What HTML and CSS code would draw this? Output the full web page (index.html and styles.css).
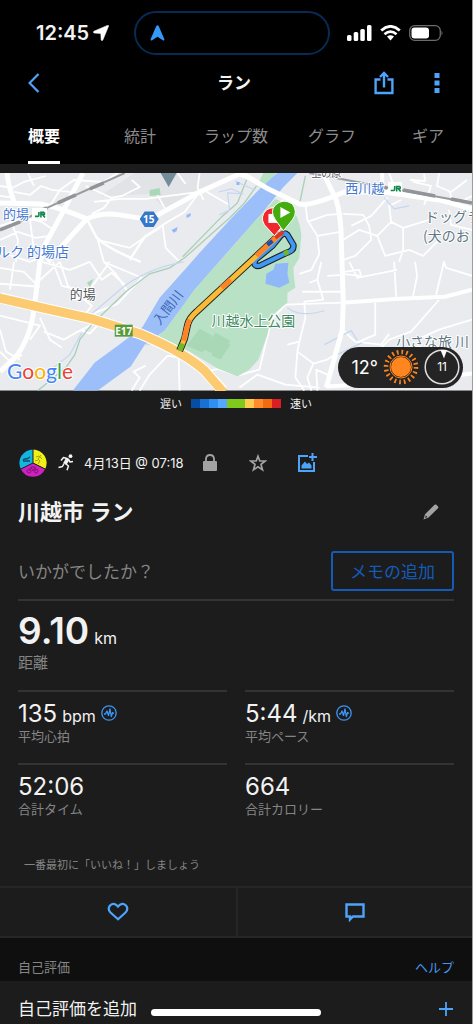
FILE: index.html
```html
<!DOCTYPE html>
<html lang="ja">
<head>
<meta charset="utf-8">
<meta name="viewport" content="width=device-width, initial-scale=1">
<title>ラン</title>
<link rel="stylesheet" href="styles.css">
</head>
<body>
<div class="app">
  <header class="top">
    <div class="status">
      <div class="clock"><span>12:45</span>
        <svg width="16" height="16" viewBox="0 0 16 16"><path d="M15.500 1.200 9.800 15Q9 16.500 8.200 15L7.800 8.400 1.200 8Q-.4 7.300 1 6.200L14.500 .4Q15.800 .2 15.500 1.200Z" fill="#fff" stroke="#fff" stroke-width=".6"/></svg>
      </div>
      <div class="island">
        <svg width="15" height="16" viewBox="0 0 15 16"><path d="M6.200 1.200Q7.500-.8 8.800 1.200L14.400 14.200Q14.600 16 12.800 15.200L7.500 11.800 2.200 15.200Q.4 16 .6 14.200Z" fill="#3598fb"/></svg>
      </div>
      <div class="signals">
        <svg width="25" height="16" viewBox="0 0 25 16" fill="#fff"><rect x="0" y="10" width="4.500" height="6" rx="1.500"/><rect x="6.700" y="7" width="4.500" height="9" rx="1.500"/><rect x="13.300" y="4" width="4.500" height="12" rx="1.500"/><rect x="20" y="0" width="4.500" height="16" rx="1.500"/></svg>
        <svg width="21" height="16" viewBox="0 0 21 16" fill="none" stroke="#fff" stroke-width="2.800"><path d="M1.200 5.500Q10.500-2.700 19.800 5.500M4.500 9.200Q10.500 4 16.500 9.200"/><path d="M7 11.600Q10.500 8.800 14 11.600L10.500 15.500Z" fill="#fff" stroke="none"/></svg>
        <svg width="35" height="16" viewBox="0 0 35 16"><rect x=".7" y=".7" width="30.600" height="14.600" rx="5" fill="none" stroke="#6b6b6b" stroke-width="1.300"/><rect x="2.500" y="2.500" width="17.500" height="11" rx="3" fill="#fff"/><path d="M32.500 5.500Q34.500 8 32.500 10.500Z" fill="#6b6b6b"/></svg>
      </div>
    </div>
    <div class="nav">
      <button class="icon" type="button" aria-label="戻る"><svg width="12" height="20" viewBox="0 0 12 20" fill="none" stroke="#4ea4fb" stroke-width="2.200"><path d="M10.500 1 1.600 10 10.500 19"/></svg></button>
      <h1>ラン</h1>
      <div class="nav-right">
        <button class="icon" type="button" aria-label="共有"><svg width="20" height="24" viewBox="0 0 20 24" fill="none" stroke="#4ea4fb" stroke-width="2.400"><path d="M6.500 8.500H1.600V22H18.400V8.500H13.500M10 16.500V2.500M6 6 10 2 14 6"/></svg></button>
        <button class="icon" type="button" aria-label="メニュー"><svg width="6" height="22" viewBox="0 0 6 22" fill="#4ea4fb"><path d="M.5 1h5v5h-5zM.5 8.500h5v5h-5zM.5 16h5v5h-5z"/></svg></button>
      </div>
    </div>
    <nav class="tabs">
      <a class="on" href="#overview">概要</a><a href="#stats">統計</a><a href="#laps">ラップ数</a><a href="#graph">グラフ</a><a href="#gear">ギア</a>
    </nav>
  </header>

  <section class="map">
    <svg class="map-art" viewBox="0 173 473 218">
      <rect y="173" width="473" height="218" fill="#e9ebee"/>
      <path d="M135 173H240L165 208 150 194 100 196Z" fill="#e1e3e7"/>
      <g fill="none" stroke="#fff" stroke-width="1.800" stroke-linejoin="round">
        <path d="M0 186 12 188 24 182 46 176M14 192 30 195 41 186 52 190 70 192M28 173 34 186M0 196 15 198M50 206 60 190 74 180 104 182 118 173M86 186 112 198 122 196 140 187 132 180M94 202 120 199 146 199 200 192M112 198 104 208 92 214M0 226 25 218 42 222 55 231M0 240 18 232 36 238 50 236M10 218 18 240 16 262M30 220 34 250M0 252 30 262 44 256M0 268 24 272 36 284 60 262M14 262 10 290M0 284 40 287M53 262 62 286 78 290M42 262 70 270 90 262 102 280 112 273 125 285M60 262 68 286 92 306 84 316M75 300 90 290 110 262M104 262 142 278 118 304 88 316M98 240 104 262 116 274 128 292M98 240 130 248 163 225M0 316 40 326 30 340M0 330 6 352 20 360M40 318 50 340 62 348M44 332 64 340 76 333 98 322M80 330 90 334 105 318 122 326M0 352 10 362 22 355M165 208 155 190M200 173 198 188 204 200M204 190 230 205M178 173 186 184M163 225 166 248 180 262M163 225 185 212 200 192"/>
        <path d="M306 204 308 220 318 236 320 254 312 270 300 274M256 204 272 206 284 200M308 222 328 215 343 214M318 236 341 232M344 240 360 230 378 236 392 222 404 228 430 220M352 226 372 216 388 198M344 214 364 215 370 226 372 240 356 256 344 260M378 236 386 256 410 250 424 256 440 240M392 222 390 206 402 200M404 228 404 250 400 262M395 262 397 297M414 296 418 276 416 262M437 295 445 262 447 268 473 276M350 262 358 278 398 270M344 262 342 274 362 276 360 270 344 272M322 262 318 280 324 300 305 302 306 318 300 342 288 345 M318 280 310 283M328 276 344 275M343 292 316 292 303 292M376 303 376 335 360 342M343 330 356 342 382 345 390 334M300 342 298 352 314 364 308 378 312 391M314 364 328 360 336 355M298 352 296 378 305 391M318 391 317 370 330 376M440 173 438 186 452 192 468 180M425 205 432 186 414 182M390 173 394 184M411 180 426 181 425 174M450 190 455 205 473 196M473 230 452 225 450 210"/>
        <path d="M180 391 179 358 168 356 150 375 140 391M132 391 140 378 134 372 146 366M196 365 210 371 224 368M218 369 238 376 260 370 266 345 272 320 286 305 343 303M240 388 258 375 286 385 320 388M418 340 440 330 473 320M375 355 390 340 412 332 440 300"/>
      </g>
      <g fill="none" stroke="#a9cfb5" stroke-width="1.300"><path d="M257 186 245 203 230 218 185 258 170 268 150 274 126 292 98 319M247 180 238 203 222 217 183 257M98 317 80 340 75 355 66 368 38 391M306 176 300 205"/></g>
      <path d="M184 262Q150 268 125 286L92 314M82 333 70 355 45 375M219 192 232 189 244 194 228 193 230 210 220 215M236 181 246 186 256 190M385 198 395 209 410 206M325 345 352 331 358 341M338 355 363 343M288 308Q300 318 325 311" fill="none" stroke="#c6d7f2" stroke-width="1.200"/>
      <path d="M278 173 267 182 233 217 200 253 186 269 160 298 150 315 143 327 118 346 95 363 73 391H98L131 367 145 345 165 331 182 308 195 290 225 256 262 214 284 187 298 173Z" fill="#9cbffa"/>
      <path d="M145 346 165 331 182 308 195 290 225 256 262 214 276 199 290 205Q300 216 302 235L300 258 294 268 295 281 296 288 288 293 288 303 272 316 268 335 259 360 250 370 238 377 218 369 190 352 165 341ZM264 173H277L262 188 257 186Z" fill="#b9e1c5"/>
      <path d="M200 329 213 336 203 353 187 346ZM216 333 231 341 219 356 204 350ZM220 340 231 345 221 360 212 356Z" fill="#a9d8b6"/>
      <path d="M150 190 160 188 161 195 150 196ZM87 283 94 279 90 287Z" fill="#a9d8b6"/>
      <path d="M267 274 274 270 276 264 289 263 288 274 290 283 280 288 266 284ZM172 230 178 227 177 231 174 233ZM187 215 191 213 191 216 187 218ZM237 182 240 182 240 185 237 185Z" fill="#90b7f8"/>
      <g fill="none" stroke="#fff" stroke-linejoin="round">
        <path d="M7 173Q8 184 14 202M0 203 40 204Q56 206 87 219L65 243 48 262M87 219Q102 212 120 215L145 219" stroke-width="5"/>
        <path d="M83 173 62 214 46 243 40 262 34 310Q30 340 15 358L0 372" stroke-width="5"/>
        <path d="M150 219 160 214 200 192 240 174 247 176 267 188 300 204Q310 207 345 192H385L440 200 473 209" stroke-width="5"/>
        <path d="M324 173 337 200Q342 218 342 240L344 303 343 330 327 388" stroke-width="5"/>
        <path d="M343 303 400 299 446 297 473 290M327 387 400 383 473 374M383 173V190" stroke-width="4"/>
        <path d="M87 219 97 238Q110 250 141 262M161 227 145 237 130 260" stroke-width="2.500"/>
      </g>
      <path d="M0 230 20 222 47 208 125 173M310 173 390 188 473 203" fill="none" stroke="#999b9e" stroke-width="2"/>
      <path d="M0 230 20 222M40 211 47 208M58 203 76 195M90 189 104 183M372 185 388 188M404 190 436 196M452 199 473 203" fill="none" stroke="#929497" stroke-width="3.500"/>
      <path d="M161 173H177L169 187Z" fill="#738c9a"/>
      <path d="M0 298Q45 309 91 319L140 334Q185 353 205 371L223 391" fill="none" stroke="#fff" stroke-width="11"/>
      <path d="M-2 298Q45 309 91 319L140 334Q185 353 205 371L224 393" fill="none" stroke="#fbca71" stroke-width="9"/>
      <g fill="none" stroke-linejoin="round">
        <path d="M180 351 185 339 188 325Q190 318 197 312L281 234" stroke="#222" stroke-width="7"/>
        <path d="M281 236 273 246 256 260Q253 267 260 266L287 253Q295 251 294 245L288 235Q285 232 281 236Z" stroke="#222" stroke-width="6.500"/>
        <path d="M281 236 273 246 256 260Q253 267 260 266L287 253Q295 251 294 245L288 235Q285 232 281 236Z" stroke="#3e98f4" stroke-width="4.200"/>
        <path d="M180 351 185 339 188 325Q190 318 197 312L281 234" stroke="#fbba35" stroke-width="5"/>
        <path d="M184 341 188 325 190 320M222 288 231 280M257 256 277 237" stroke="#fb8328" stroke-width="5"/>
        <path d="M180 351 183 344M285 254 289 252" stroke="#6fba24" stroke-width="5"/>
        <path d="M276 238 284 232" stroke="#df3526" stroke-width="4"/>
        <path d="M268 245 273 241" stroke="#1c50a8" stroke-width="4"/>
      </g>
      <path d="M275 236 265 225Q260 217 267 210 273 206 281 209L288 220Z" fill="#f0272d" stroke="#fff"/>
      <rect x="269" y="214" width="10" height="9" fill="#fff"/>
      <path d="M284 231 276 220Q270 211 276 205 284 198 293 204 299 212 293 220Z" fill="#43ad10" stroke="#fff"/>
      <path d="M281 207V218L291 212.500Z" fill="#fff"/>
      <rect x="32" y="208" width="15" height="13" fill="#fff"/><rect x="389" y="182" width="14" height="13" fill="#fff"/>
      <g fill="none" stroke="#11884c" stroke-width="1.600"><path d="M35 216.500H38Q39 216.500 39 215V212M41 217.500V212.500H44Q45 213 44.500 214.500H42.500L45 217.500"/><path d="M391.500 190.500H394.500Q395.500 190.500 395.500 189V186M397.500 191.500V186.500H400.500Q401.500 187 401 188.500H399L401.500 191.500"/></g>
      <path d="M145 211.500H154L159 219 154 227H145L140 219Z" fill="#3478c7"/>
      <rect x="115" y="325" width="18" height="12" fill="#569a3c"/>
      <g class="map-text">
        <text class="badge" x="149" y="223" text-anchor="middle">15</text>
        <text class="badge" x="124" y="335" text-anchor="middle">E17</text>
        <text class="blue" x="3" y="219">的場</text>
        <text class="blue big" x="-4" y="257">ルク 的場店</text>
        <text class="blue" x="346" y="193">西川越</text>
        <text class="dark" x="70" y="299">的場</text>
        <text class="green" x="212" y="326">川越水上公園</text>
        <text class="slate" x="426" y="222">ドッグラ</text>
        <text class="slate" x="424" y="241">(犬のお</text>
        <text class="slate" x="397" y="347">小さな旅 川</text>
        <text class="water" transform="translate(160 326) rotate(-52)">入間川</text>
        <text class="dark small" x="312" y="177">上の原</text>
        <text class="google" x="7" y="379"><tspan fill="#4285f4">G</tspan><tspan fill="#ea4335">o</tspan><tspan fill="#f5b400">o</tspan><tspan fill="#4285f4">g</tspan><tspan fill="#34a853">l</tspan><tspan fill="#ea4335">e</tspan></text>
      </g>
    </svg>
    <div class="weather">
      <span>12°</span>
      <svg width="36" height="36" viewBox="-18 -18 36 36"><circle r="10" fill="#ff861f"/><circle r="11" fill="none" stroke="#ff861f" stroke-width="1"/><circle r="15" fill="none" stroke="#ff861f" stroke-width="4.500" stroke-dasharray="1.700 3.012"/></svg>
      <svg width="36" height="36" viewBox="-18 -18 36 36"><circle r="16.800" fill="none" stroke="#ddd" stroke-width="1.500"/><path d="M-1.500-17H5L2-8.500Z" fill="#fff"/><text y="4" text-anchor="middle" class="wind">11</text></svg>
    </div>
  </section>

  <div class="legend"><span>遅い</span><div class="scale"><i class="c1"></i><i class="c2"></i><i class="c3"></i><i class="c4"></i><i class="c5"></i><i class="c5"></i><i class="c6"></i><i class="c7"></i><i class="c8"></i><i class="c9"></i></div><span>速い</span></div>

  <main class="main">
    <div class="meta">
      <svg width="28" height="28" viewBox="-14 -14 28 28"><path d="M0 0V-13.500A13.500 13.500 0 0 0-12.200 6Z" fill="#12b4e0"/><path d="M0 0V-13.500A13.500 13.500 0 0 1 12.200 6Z" fill="#f1f016"/><path d="M0 0-12.200 6A13.500 13.500 0 0 0 12.200 6Z" fill="#cf21c1"/><path d="M0-14V0L-12.500 6.200M0 0 12.500 6.200" stroke="#1c1c1c" fill="none"/><path d="M-10-3Q-8-5-6-4L-3-6M-10-2H-3" stroke="#134a66" stroke-width="1.500" fill="none"/><path d="M8-8 5-4 7-2 5 1M3-6 6-7 9-4M5-3 2-2" stroke="#a3a20b" fill="none"/><circle cx="-4" cy="8" r="2" fill="none" stroke="#81157a"/><circle cx="3" cy="8" r="2" fill="none" stroke="#81157a"/><path d="M-4 8-2 4 2 4 3 8M-2 4 0 8 2 4" stroke="#81157a" fill="none"/></svg>
      <svg class="runner" width="16" height="17" viewBox="0 0 16 17" fill="none" stroke="#f2f2f2" stroke-width="1.500" stroke-linejoin="round"><circle cx="12.500" cy="2.200" r="1.900" fill="#f2f2f2" stroke="none"/><path d="M9.800 4.800 6.800 10" stroke-width="3.800"/><path d="M10.500 5 5.500 3.500 3 6.500M10.500 5.500 12 8 15 7.500M7.500 9.500 10.500 12 9 16.200M6 9.500 4.500 12.500 .5 13.500"/></svg>
      <span class="date">4月13日 @ 07:18</span>
      <svg class="lock" width="14" height="17" viewBox="0 0 14 17"><rect y="7" width="14" height="10" rx="1" fill="#a3a3a3"/><path d="M3 8V4.500Q3.500 1 7 1T11 4.500V8" fill="none" stroke="#a3a3a3" stroke-width="1.800"/></svg>
      <button class="icon" type="button" aria-label="お気に入り"><svg width="18" height="18" viewBox="0 0 18 18" fill="none" stroke="#a3a3a3" stroke-width="1.700"><path d="M9 2.200 10.800 7H16.200L12 10.400 13.500 15.800 9 12.700 4.500 15.800 6 10.400 1.800 7H7.200Z"/></svg></button>
      <button class="icon photo" type="button" aria-label="写真を追加"><svg width="20" height="20" viewBox="0 0 20 20" fill="none" stroke="#4ea4fb" stroke-width="2"><path d="M11 3H2V18H17V9M15.500 0V8M12 4H20"/><path d="M4.500 15.500V12.500L8 8.500 10 11 12 9.500 14.500 12.500V15.500Z" fill="#4ea4fb" stroke="none"/></svg></button>
    </div>
    <div class="title"><h2>川越市 ラン</h2>
      <button class="icon" type="button" aria-label="編集"><svg width="16" height="16" viewBox="0 0 16 16"><path d="M11.500 .8Q12.500 0 13.400 .8L15 2.400Q15.800 3.300 15 4.200L5.500 13.600.5 15.500 2 10.300ZM2.900 11.600 2 14 4.300 13.100Z" fill="#a3a3a3" fill-rule="evenodd"/></svg></button>
    </div>
    <div class="memo"><span>いかがでしたか？</span><button type="button">メモの追加</button></div>
    <div class="hero"><p class="value">9.10 <small>km</small></p><p class="label">距離</p></div>
    <div class="stats">
      <div class="stat"><p class="value">135 <small>bpm</small><svg width="16" height="16" viewBox="0 0 16 16" fill="none" stroke="#3d95f5" stroke-width="1.300" stroke-linejoin="round"><circle cx="8" cy="8" r="7.200"/><path d="M3 9H4.500L6 6 7.500 10.500 9 4 10.300 11.500 11.600 7.500 13 8.500"/></svg></p><p class="label">平均心拍</p></div>
      <div class="stat"><p class="value">5:44 <small>/km</small><svg width="16" height="16" viewBox="0 0 16 16" fill="none" stroke="#3d95f5" stroke-width="1.300" stroke-linejoin="round"><circle cx="8" cy="8" r="7.200"/><path d="M3 9H4.500L6 6 7.500 10.500 9 4 10.300 11.500 11.600 7.500 13 8.500"/></svg></p><p class="label">平均ペース</p></div>
      <div class="stat"><p class="value">52:06</p><p class="label">合計タイム</p></div>
      <div class="stat"><p class="value">664</p><p class="label">合計カロリー</p></div>
    </div>
    <p class="likes">一番最初に「いいね！」しましょう</p>
  </main>

  <div class="actions">
    <button type="button" aria-label="いいね"><svg width="22" height="20" viewBox="0 0 22 20" fill="none" stroke="#4ea4fb" stroke-width="2.200"><path d="M11 17.200 3.500 10.500Q.2 7 3 3.500 7-.2 11 4.500 15-.2 19 3.500 21.800 7 18.500 10.500Z"/></svg></button>
    <button type="button" aria-label="コメント"><svg width="20" height="20" viewBox="0 0 20 20" fill="none" stroke="#4ea4fb" stroke-width="2.400"><path d="M1.500 2.500H18.500V14.500H8L5 17.500V14.500H1.500Z"/></svg></button>
  </div>
  <div class="section"><h3>自己評価</h3><a href="#help">ヘルプ</a></div>
  <button class="add" type="button"><span>自己評価を追加</span><svg width="14" height="14" viewBox="0 0 14 14" stroke="#4ea4fb" stroke-width="1.800"><path d="M7 0V14M0 7H14"/></svg></button>
  <div class="home"></div>
</div>
</body>
</html>
```
FILE: styles.css
```css
* { box-sizing: border-box; }
body {
  margin: 0;
  background: #1c1c1c;
  color: #f2f2f2;
  font-family: Inter, "Noto Sans CJK JP", sans-serif;
  font-size: 16px;
}
h1, h2, h3, p { margin: 0; font-weight: 400; }
svg { display: block; flex: none; }
a { color: inherit; text-decoration: none; }
button { font: inherit; color: inherit; background: none; border: 0; padding: 0; cursor: pointer; }
.app { position: relative; min-height: 100vh; overflow: hidden; border-right: 1px solid #9c9c9c; background: #1c1c1c; }

.top { background: #000; overflow: hidden; border-bottom: 8px solid #1c1c1c; }
.status { display: grid; grid-template-columns: 19fr 196px 20fr; align-items: center; height: 66px; }
.clock { display: flex; align-items: center; gap: 4px; padding-left: 36px; font-size: 20px; font-weight: 600; line-height: 24px; }
.island { height: 44px; display: flex; align-items: center; padding-left: 14px; border: 2px solid #062b55; border-radius: 22px; }
.signals { display: flex; align-items: center; justify-content: flex-end; gap: 8px; padding-right: 28px; }
.nav { display: grid; grid-template-columns: 1fr auto 1fr; align-items: center; height: 34px; padding: 0 32px 0 28px; }
.nav h1 { font-size: 17px; font-weight: 600; line-height: 24px; }
.nav-right { display: flex; justify-content: flex-end; align-items: center; gap: 40px; }
.icon { display: flex; justify-self: start; }
.tabs { display: grid; grid-template-columns: repeat(5, 1fr); justify-items: center; margin: 0 -4px; padding-top: 8px; color: #8c8c8c; }
.tabs a { height: 56px; line-height: 56px; border-bottom: 3px solid transparent; }
.tabs .on { color: #fff; font-weight: 600; border-color: #fff; }

.map { position: relative; margin-top: 1px; }
.map-art { width: 100%; height: auto; }
.map-text { font-family: "Noto Sans CJK JP", sans-serif; font-size: 13px; }
.map-text text { paint-order: stroke; stroke: #fff; stroke-width: 2px; stroke-linejoin: round; }
.map-text .badge { font: 700 10px "Noto Sans", sans-serif; fill: #fff; stroke: none; }
.blue { fill: #4478d0; }
.big, .slate, .green { font-size: 14px; }
.green { fill: #3b8b60; }
.slate { fill: #607783; }
.dark { fill: #55595d; }
.small { font-size: 10px; }
.map-text .water { fill: #3e68b5; stroke: none; }
.google { font: 400 21px Lato, sans-serif; }
.weather { position: absolute; right: 9px; bottom: 3px; display: flex; align-items: center; gap: 5px; height: 41px; padding: 0 3px 0 14px; border-radius: 21px; background: #242424; font-size: 18px; color: #fff; }
.wind { font-size: 12px; fill: #fff; }

.legend { display: flex; justify-content: center; align-items: center; gap: 9px; height: 26px; font-size: 11px; line-height: 16px; }
.scale { display: grid; grid-template-columns: repeat(10, 9px); height: 9px; }
.c1 { background: #064da4; } .c2 { background: #1872d5; } .c3 { background: #3090f2; } .c4 { background: #55a8ff; }
.c5 { background: #80c91c; } .c6 { background: #ffca51; } .c7 { background: #ff8d2c; } .c8 { background: #f36b10; } .c9 { background: #d91f24; }

.main { padding: 32px 18px 0; }
.meta { display: flex; align-items: center; height: 28px; padding-left: 1px; }
.runner { margin-left: 11px; }
.date { margin-left: 10px; font-size: 13px; line-height: 20px; }
.lock { margin: 0 32px 0 19px; }
.photo { margin-left: 30px; }
.title { display: flex; justify-content: space-between; align-items: center; height: 32px; margin-top: 19px; padding-right: 15px; }
.title h2 { font-size: 22px; font-weight: 600; line-height: 32px; }
.memo { display: flex; justify-content: space-between; align-items: center; margin-top: 23px; padding-bottom: 8px; border-bottom: 2px solid #333; color: #858585; font-size: 17px; }
.memo button { height: 40px; padding: 0 17px; border: 2px solid #145bb8; border-radius: 3px; color: #145bb8; }
.hero { height: 89px; padding-top: 9px; }
.value { display: flex; align-items: baseline; gap: 5px; height: 27px; font-size: 24px; line-height: 28px; }
.value small { font-size: 16px; }
.value svg { align-self: center; }
.label { color: #858585; font-size: 13px; line-height: 18px; }
.hero .value { height: 42px; font-size: 37px; font-weight: 600; line-height: 42px; }
.hero small { font-weight: 400; }
.hero .label { font-size: 15px; line-height: 22px; }
.stats { display: grid; grid-template-columns: 1fr 1fr; column-gap: 18px; }
.stat { height: 73px; border-top: 2px solid #333; padding-top: 8px; }
.likes { padding: 21px 6px 13px; font-size: 11px; line-height: 16px; color: #858585; }
.actions { display: grid; grid-template-columns: 1fr 1fr; border: solid #262626; border-width: 2px 0; }
.actions button { display: flex; justify-content: center; align-items: center; height: 48px; }
.actions button + button { border-left: 2px solid #262626; }
.section { display: flex; justify-content: space-between; align-items: flex-end; height: 43px; padding: 0 18px 4px; background: #0f0f0f; font-size: 13px; line-height: 20px; }
.section h3 { font-size: 13px; color: #858585; }
.section a { color: #4696ec; }
.add { display: flex; justify-content: space-between; align-items: center; width: 100%; padding: 15px 19px 2px 18px; font-size: 17px; line-height: 26px; }
.home { position: absolute; left: 50%; bottom: 8px; width: 170px; height: 7px; margin-left: -85px; border-radius: 4px; background: #fff; }
```
